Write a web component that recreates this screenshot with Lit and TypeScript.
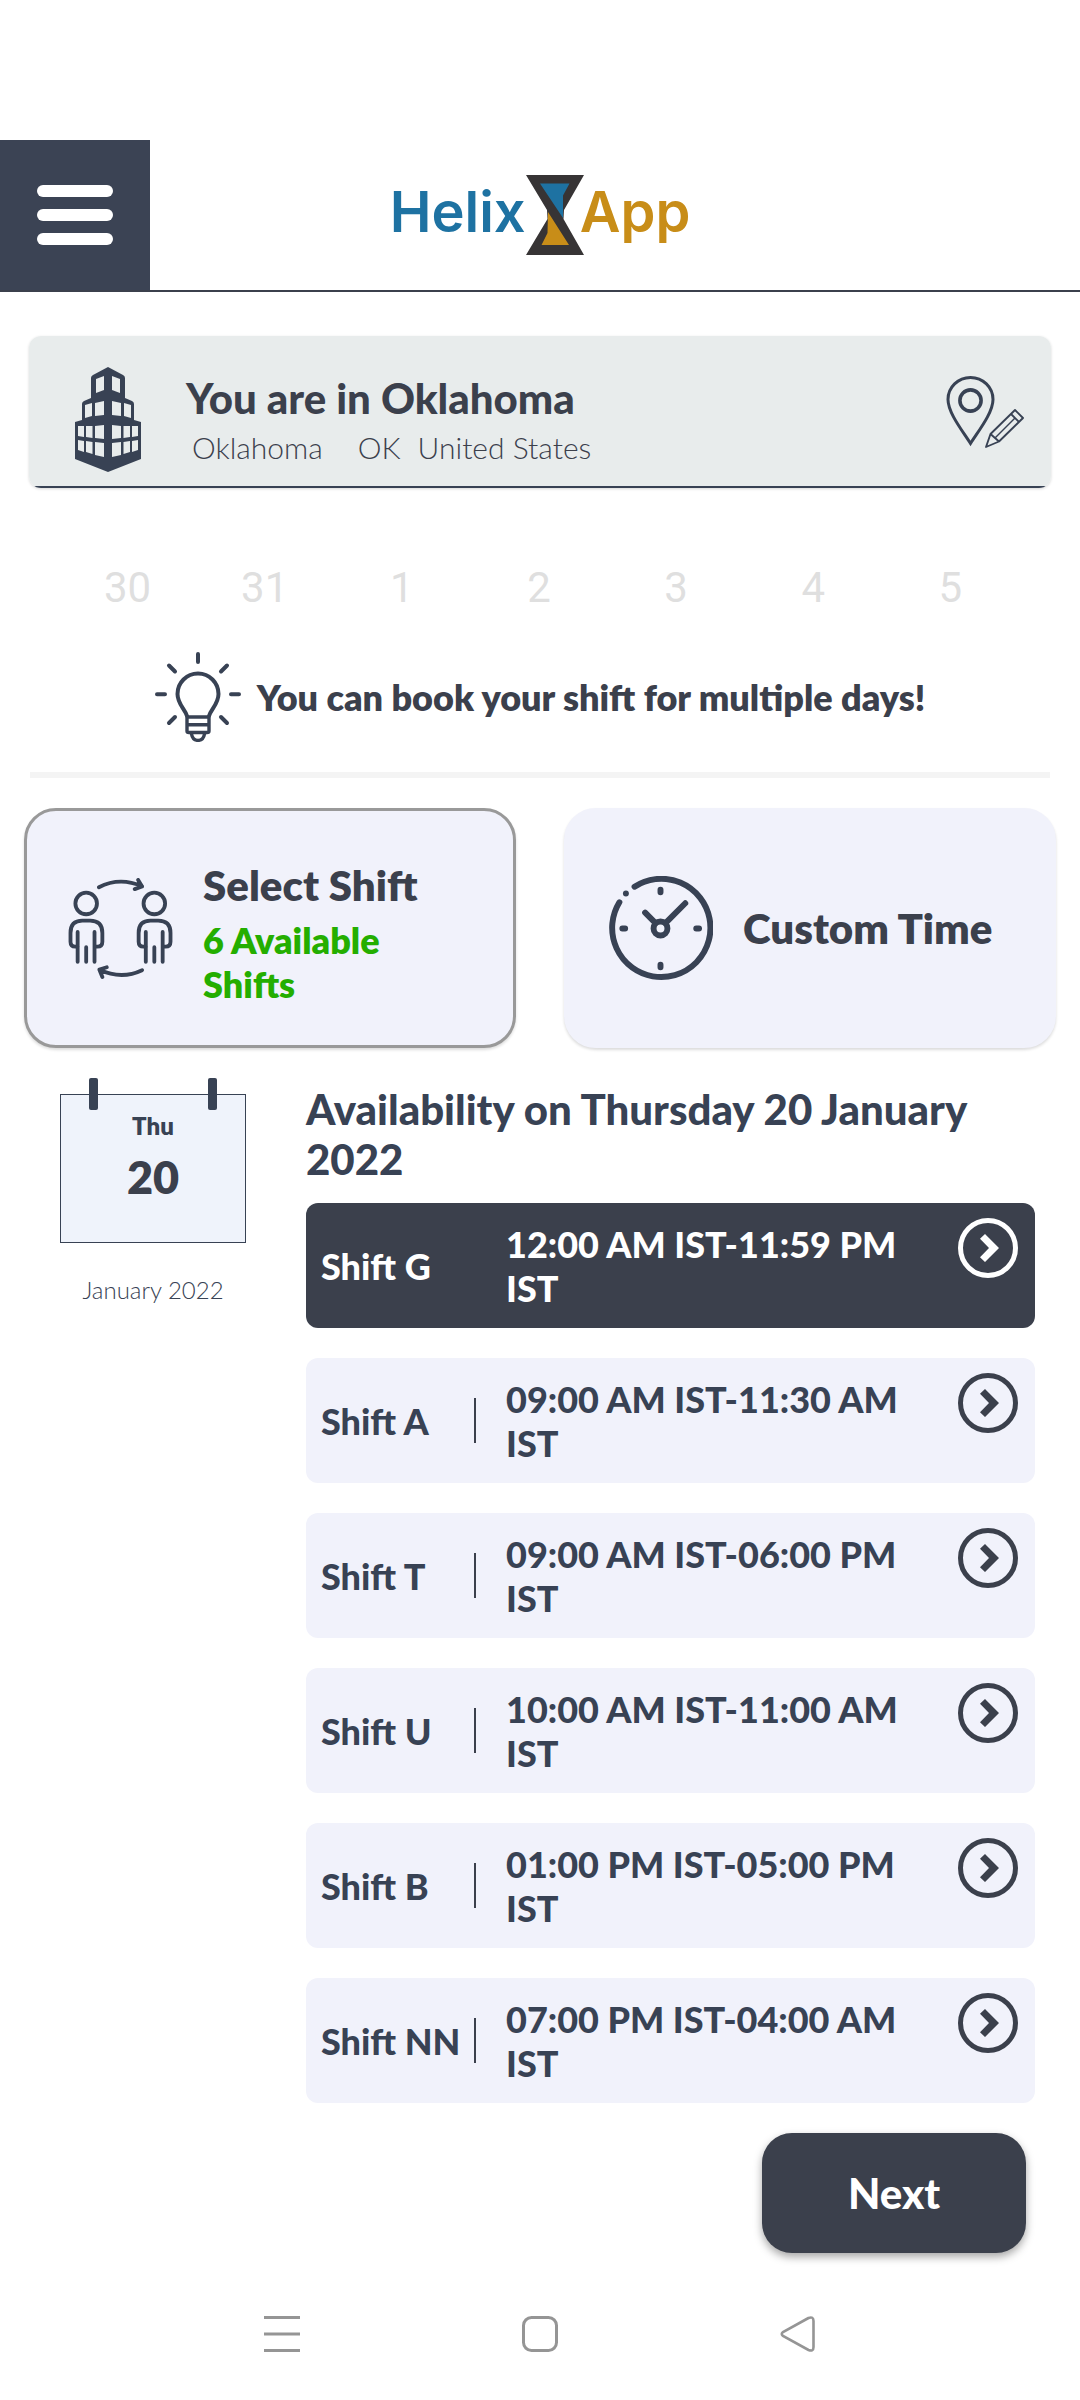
import { LitElement, html, css, svg } from "lit";
import { customElement, property, state } from "lit/decorators.js";
import { classMap } from "lit/directives/class-map.js";

interface Shift {
  name: string;
  time: string;
}

const SHIFTS: Shift[] = [
  { name: "Shift G", time: "12:00 AM IST-11:59 PM IST" },
  { name: "Shift A", time: "09:00 AM IST-11:30 AM IST" },
  { name: "Shift T", time: "09:00 AM IST-06:00 PM IST" },
  { name: "Shift U", time: "10:00 AM IST-11:00 AM IST" },
  { name: "Shift B", time: "01:00 PM IST-05:00 PM IST" },
  { name: "Shift NN", time: "07:00 PM IST-04:00 AM IST" },
];

const DAYS = [30, 31, 1, 2, 3, 4, 5];

const buildingWindows = svg`
  <path d="M21 12 L29 9 V23 L21 26Z"/>
  <path d="M20 36 L29 34 V48 L20 49Z M10 38 L17 36 V49 L10 51Z"/>
  <path d="M20 59 L29 58 V72 L20 71Z M11 59 H17.5 V71 L11 70Z M3 59 H9 V70 L3 69Z"/>
  <path d="M20 75 L29 76 V90 L20 88Z M11 74 L17.5 75 V87 L11 85Z M3 73 L9 74 V85 L3 83Z"/>`;

const buildingIcon = html`<svg class="building" width="66" height="105" viewBox="0 0 66 105" aria-hidden="true">
  <path fill="#384254" d="M33 0 L48 8 Q50 9 50 11 V31 L57 34 Q59 35 59 37 V53 L66 55 V92 L33 105 L0 92 V55 L7 53 V37 Q7 35 9 34 L16 31 V11 Q16 9 18 8Z"/>
  <g fill="#e8ecec">${buildingWindows}</g>
  <g fill="#e8ecec" transform="translate(66 0) scale(-1 1)">${buildingWindows}</g>
</svg>`;

const pinIcon = html`<svg width="79" height="73" viewBox="0 0 79 73" fill="none" stroke="#384254" aria-hidden="true">
  <path stroke-width="3" d="M24.5 67.5 C17 55.5 2 37 2 23.5 A22.5 22 0 0 1 47 23.5 C47 37 32 55.5 24.5 67.5Z"/>
  <circle cx="24.5" cy="24.5" r="10.6" stroke-width="3.6"/>
  <path stroke-width="1.9" stroke-linejoin="round" d="M40 71 L44.5 58 L69 34 L77 42 L53 65.5Z M44.5 58 L53 65.5 M65 38 L73 46"/>
  <path stroke-width="1.5" d="M49 62 L69 42"/>
</svg>`;

const bulbIcon = html`<svg width="86" height="90" viewBox="0 0 86 90" fill="none" stroke="#384254" stroke-width="4" stroke-linecap="round" aria-hidden="true">
  <path d="M32 64 C30 57 22.5 52 22.5 42 A20.5 20.5 0 0 1 63.5 42 C63.5 52 56 57 54 64"/>
  <path stroke-width="3.4" d="M32 65 H54 V79 Q54 80.5 52 80.5 H34 Q32 80.5 32 79Z M32 72.8 H54"/>
  <path stroke-width="3.4" d="M36.5 82 C38 90.5 48 90.5 49.5 82"/>
  <path d="M43 2 V10 M2 42.3 H10 M76 42.3 H84 M14 13.5 L20 19.5 M72 13.5 L66 19.5 M14 71 L20 65 M72 71 L66 65"/>
</svg>`;

const person = svg`
  <circle cx="18" cy="26" r="11"/>
  <path d="M9 70 H7 Q2 70 2 65 V56 Q2 43.5 14 43.5 H22 Q34.5 43.5 34.5 56 V65 Q34.5 70 29.5 70 H27"/>
  <path d="M9.3 55 V85.5 M26.5 55 V85.5 M18 70.5 V85.5"/>`;

const peopleIcon = html`<svg width="105" height="101" viewBox="0 0 106 103" fill="none" stroke="#384254" stroke-width="3.9" stroke-linecap="round" stroke-linejoin="round" aria-hidden="true">
  ${person}
  <g transform="translate(69.5 0)">${person}</g>
  <path d="M31 9.5 Q52 -1.5 75 8.5 M71 2 L75 8.7 L67.5 11.3"/>
  <path d="M75 94 Q54 104 31.5 93.5 M39 91 L31.5 93.5 L34.5 101"/>
</svg>`;

const clockIcon = html`<svg width="105" height="105" viewBox="0 0 105 106" fill="none" stroke="#384254" stroke-width="6" stroke-linecap="round" aria-hidden="true">
  <path d="M26.3 10.8 A49.6 49.6 0 1 1 11 26.5"/>
  <circle cx="17.6" cy="17.6" r="3" fill="#384254" stroke="none"/>
  <circle cx="52.5" cy="53" r="7"/>
  <path d="M52.5 13.8 V16.4 M52.5 89.6 V92.2 M14 53 H16.8 M88.6 53 H91.4 M47.5 47.5 L37 37 M57.5 47.5 L77.5 27.5"/>
</svg>`;

const arrowIcon = html`<svg width="60" height="60" viewBox="0 0 60 60" aria-hidden="true">
  <circle cx="30" cy="30" r="27.5" fill="none" stroke="currentColor" stroke-width="5"/>
  <path fill="currentColor" d="M27 16 L41 30 L27 44 L22 39.2 L31 30 L22 20.8Z"/>
</svg>`;

@customElement("app-header")
export class AppHeader extends LitElement {
  static styles = css`
    :host {
      display: block;
      border-bottom: 2px solid #3b404c;
    }
    .bar {
      display: grid;
      grid-template-columns: 150px 1fr 150px;
      align-items: center;
    }
    .menu {
      display: grid;
      place-content: center;
      height: 150px;
      border: 0;
      padding: 0;
      background: #3b4354;
      cursor: pointer;
    }
    .logo {
      display: flex;
      align-items: flex-start;
      justify-content: center;
      font: 600 56px/74px Inter, "Open Sans", sans-serif;
      text-decoration: none;
    }
    .blue {
      color: #1e72a2;
    }
    .gold {
      margin-left: -4px;
      color: #c88d18;
    }
  `;

  render() {
    return html`<header class="bar">
      <button class="menu" aria-label="Menu">
        <svg width="76" height="60" viewBox="0 0 76 60" fill="#fff" aria-hidden="true">
          <rect width="76" height="12" rx="6" /><rect y="24" width="76" height="12" rx="6" /><rect y="48" width="76" height="12" rx="6" />
        </svg>
      </button>
      <a class="logo" href="#">
        <span class="blue">Helix</span>
        <svg width="58" height="80" viewBox="0 0 58 80" aria-hidden="true">
          <path fill="#373435" d="M0 0 H58 L38 35 L37.5 44 L58 80 H0 L21.5 44 L21 35Z" />
          <path fill="#1e72a2" d="M14 8.5 H43.5 L37 20.5 V43Z" />
          <path fill="#c88d18" d="M22 37 L43 70 H15.5 L21.5 58Z" />
        </svg>
        <span class="gold">App</span>
      </a>
    </header>`;
  }
}

@customElement("shift-row")
export class ShiftRow extends LitElement {
  @property({ attribute: false }) shift!: Shift;
  @property({ type: Boolean }) active = false;

  static styles = css`
    :host {
      display: block;
    }
    .row {
      display: flex;
      align-items: center;
      box-sizing: border-box;
      width: 100%;
      min-height: 125px;
      padding: 15px 17px 15px 15px;
      border: 0;
      border-radius: 12px;
      background: #f1f2fb;
      color: #384254;
      font: 900 36px/44px Lato, sans-serif;
      text-align: left;
      cursor: pointer;
    }
    .row.active {
      background: #3b404c;
      color: #fff;
    }
    .name {
      flex: none;
      width: 153px;
      white-space: nowrap;
    }
    .rule {
      flex: none;
      width: 2px;
      height: 45px;
      background: #3b404c;
    }
    .time {
      flex: 1;
      margin: 0 20px 0 30px;
    }
    .go {
      flex: none;
      align-self: flex-start;
      display: flex;
      color: #3b404c;
    }
    .active .go {
      color: #fff;
    }
  `;

  render() {
    return html`<button class=${classMap({ row: true, active: this.active })} aria-pressed=${this.active}>
      <span class="name">${this.shift.name}</span>
      <span class="rule"></span>
      <span class="time">${this.shift.time}</span>
      <span class="go">${arrowIcon}</span>
    </button>`;
  }
}

@customElement("app-root")
export class AppRoot extends LitElement {
  @state() private selected = 0;
  @state() private mode: "shift" | "custom" = "shift";

  static styles = css`
    :host {
      display: block;
      padding-top: 140px;
      background: #fff;
      color: #3b404c;
      font-family: Lato, sans-serif;
    }
    button {
      font-family: inherit;
      color: inherit;
      cursor: pointer;
    }
    h1,
    h2,
    p,
    ul {
      margin: 0;
      padding: 0;
      list-style: none;
    }
    .place {
      display: flex;
      align-items: center;
      box-sizing: border-box;
      min-height: 152px;
      margin: 44px 29px 0;
      padding: 0 26px 2px 46px;
      border-radius: 12px;
      background: linear-gradient(to top, #384254 2px, #e8ecec 2px);
      box-shadow: 0 1px 3px rgba(0, 0, 0, 0.16);
    }
    .building {
      margin-top: 17px;
    }
    .where {
      flex: 1;
      margin: 18px 0 0 45px;
    }
    .title {
      font-size: 42px;
      line-height: 50px;
      font-weight: 900;
    }
    .parts {
      display: flex;
      padding: 4px 0 0 6px;
      font-size: 30px;
      line-height: 40px;
      font-weight: 300;
    }
    .city {
      margin-right: 35px;
    }
    .state {
      margin-right: 17px;
    }
    .edit {
      display: flex;
      margin-top: 3px;
      padding: 0;
      border: 0;
      background: none;
    }
    .days {
      display: grid;
      grid-template-columns: repeat(7, 1fr);
      margin: 75px 61px 0 59px;
      color: #dfdfdf;
      font: 400 42px/50px Roboto, sans-serif;
      text-align: center;
    }
    .tip {
      display: flex;
      align-items: center;
      justify-content: center;
      gap: 16px;
      margin: 39px 30px 0;
      padding-bottom: 30px;
      border-bottom: 6px solid #f4f4f4;
      font-size: 36px;
      line-height: 46px;
      font-weight: 800;
    }
    .modes {
      display: grid;
      grid-template-columns: 1fr 1fr;
      gap: 48px;
      padding: 30px 24px 0;
    }
    .mode {
      display: flex;
      align-items: center;
      gap: 30px;
      min-height: 240px;
      padding: 0 41px;
      border: 3px solid #f1f2fb;
      border-radius: 32px;
      background: #f1f2fb;
      box-shadow: 0 2px 3px rgba(0, 0, 0, 0.14);
      text-align: left;
    }
    .mode.on {
      border-color: #999;
    }
    .mode svg {
      flex: none;
    }
    .labels {
      display: grid;
      gap: 8px;
      padding-top: 10px;
    }
    .label {
      font-size: 42px;
      line-height: 50px;
      font-weight: 800;
    }
    .count {
      color: #24ae00;
      font-size: 36px;
      line-height: 44px;
      font-weight: 800;
    }
    .schedule {
      display: grid;
      grid-template-columns: 186px 1fr;
      align-items: start;
      gap: 60px;
      padding: 30px 45px 0 60px;
    }
    .calendar {
      text-align: center;
    }
    .sheet {
      position: relative;
      box-sizing: border-box;
      min-height: 149px;
      margin-top: 16px;
      padding-top: 16px;
      border: 1px solid #384254;
      background: #eff3fb;
    }
    .ring {
      position: absolute;
      top: -17px;
      left: 28px;
      width: 9px;
      height: 32px;
      border-radius: 2px;
      background: #384254;
    }
    .ring.right {
      left: auto;
      right: 28px;
    }
    .weekday {
      color: #384254;
      font-size: 24px;
      line-height: 30px;
      font-weight: 800;
    }
    .date {
      margin-top: 8px;
      font-size: 45px;
      line-height: 56px;
      font-weight: 800;
    }
    .month {
      margin-top: 32px;
      color: #384254;
      font-size: 24px;
      line-height: 30px;
      font-weight: 300;
    }
    .heading {
      margin: 6px 0 19px;
      color: #384254;
      font-size: 42px;
      line-height: 50px;
      font-weight: 900;
    }
    .shifts {
      display: grid;
      gap: 30px;
    }
    .actions {
      display: flex;
      justify-content: flex-end;
      padding: 30px 54px 0;
    }
    .next {
      min-width: 264px;
      min-height: 120px;
      border: 0;
      border-radius: 30px;
      background: #3b404c;
      box-shadow: 0 4px 8px rgba(0, 0, 0, 0.35);
      color: #fff;
      font-size: 42px;
      line-height: 50px;
      font-weight: 900;
    }
    .system {
      display: flex;
      justify-content: center;
      gap: 222px;
      padding: 63px 0 48px;
    }
    .key {
      display: flex;
      padding: 0;
      border: 0;
      background: none;
    }
  `;

  render() {
    return html`
      <app-header></app-header>
      <main>
        <section class="place">
          ${buildingIcon}
          <div class="where">
            <h1 class="title">You are in Oklahoma</h1>
            <p class="parts">
              <span class="city">Oklahoma</span><span class="state">OK</span><span>United States</span>
            </p>
          </div>
          <button class="edit" aria-label="Edit location">${pinIcon}</button>
        </section>

        <div class="days">${DAYS.map((d) => html`<span>${d}</span>`)}</div>

        <div class="tip">${bulbIcon}<p>You can book your shift for multiple days!</p></div>

        <div class="modes">
          <button class=${classMap({ mode: true, on: this.mode === "shift" })} @click=${() => (this.mode = "shift")}>
            ${peopleIcon}
            <span class="labels">
              <span class="label">Select Shift</span>
              <span class="count">6 Available Shifts</span>
            </span>
          </button>
          <button class=${classMap({ mode: true, on: this.mode === "custom" })} @click=${() => (this.mode = "custom")}>
            ${clockIcon}<span class="label">Custom Time</span>
          </button>
        </div>

        <section class="schedule">
          <div class="calendar">
            <div class="sheet">
              <span class="ring"></span><span class="ring right"></span>
              <p class="weekday">Thu</p>
              <p class="date">20</p>
            </div>
            <p class="month">January 2022</p>
          </div>
          <div>
            <h2 class="heading">Availability on Thursday 20 January 2022</h2>
            <ul class="shifts">
              ${SHIFTS.map(
                (s, i) => html`<li>
                  <shift-row .shift=${s} ?active=${i === this.selected} @click=${() => (this.selected = i)}></shift-row>
                </li>`
              )}
            </ul>
          </div>
        </section>

        <div class="actions"><button class="next">Next</button></div>
      </main>

      <nav class="system" aria-label="System">
        <button class="key" aria-label="Recent apps">
          <svg width="36" height="36" viewBox="0 0 36 36" stroke="#959595" stroke-width="3"><path d="M0 1.5 H36 M0 18 H36 M0 34.5 H36" /></svg>
        </button>
        <button class="key" aria-label="Home">
          <svg width="36" height="36" viewBox="0 0 36 36" fill="none" stroke="#959595" stroke-width="3"><rect x="1.5" y="1.5" width="33" height="33" rx="8" /></svg>
        </button>
        <button class="key" aria-label="Back">
          <svg width="36" height="36" viewBox="0 0 36 36" fill="none" stroke="#959595" stroke-width="2.6"><path d="M28.5 2 L3 16 Q0.5 18 3 20 L28.5 34 Q33.5 36 33.5 31 V5 Q33.5 0 28.5 2Z" /></svg>
        </button>
      </nav>
    `;
  }
}
